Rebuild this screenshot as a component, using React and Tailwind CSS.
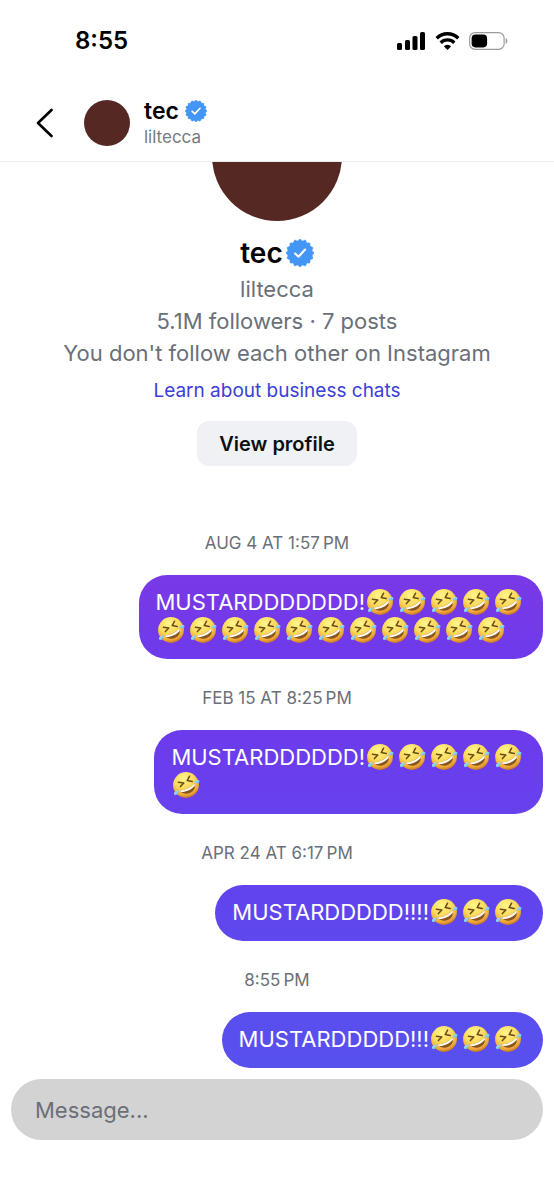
import { useState } from 'react';

const FONT = "font-['Inter','Liberation_Sans',sans-serif]";

const messages = [
   {
      time: 'AUG 4 AT 1:57\u202fPM',
      color: 'from-[#7939e6] to-[#6e3aeb]',
      lines: [{ text: 'MUSTARDDDDDDD!', laughs: 5 }, { text: '', laughs: 11 }],
   },
   {
      time: 'FEB 15 AT 8:25\u202fPM',
      color: 'from-[#6c3bec] to-[#6741ee]',
      lines: [{ text: 'MUSTARDDDDDD!', laughs: 5 }, { text: '', laughs: 1 }],
   },
   {
      time: 'APR 24 AT 6:17\u202fPM',
      color: 'from-[#6243ed] to-[#5e48ee]',
      lines: [{ text: 'MUSTARDDDDD!!!!', laughs: 3 }],
   },
   {
      time: '8:55\u202fPM',
      color: 'from-[#594eee] to-[#5850ee]',
      lines: [{ text: 'MUSTARDDDDD!!!', laughs: 3 }],
   },
];

// 16 flat teeth around the centre of a 40x40 box
const badgePoints = Array.from({ length: 64 }, (_, i) => {
   const angle = ((i - 0.5) / 64) * Math.PI * 2;
   const radius = i % 4 < 2 ? 19.7 : 17.8;
   return `${(20 + radius * Math.sin(angle)).toFixed(2)},${(20 - radius * Math.cos(angle)).toFixed(2)}`;
}).join(' ');

function VerifiedBadge({ className }) {
   return (
      <svg viewBox="0 0 40 40" className={className} role="img" aria-label="Verified">
         <polygon points={badgePoints} fill="#4496f6" stroke="#4496f6" strokeWidth="0.6" strokeLinejoin="round" />
         <path d="M13 20.6l4.8 4.7L27.3 15" fill="none" stroke="#fff" strokeWidth="3" strokeLinecap="round" strokeLinejoin="round" />
      </svg>
   );
}

function EmojiDefs() {
   return (
      <svg width="0" height="0" className="absolute" aria-hidden="true">
         <defs>
            <radialGradient id="face" cx="0.42" cy="0.25" r="0.8">
               <stop offset="0" stopColor="#fff68c" />
               <stop offset="0.5" stopColor="#fbd85a" />
               <stop offset="0.8" stopColor="#eda637" />
               <stop offset="1" stopColor="#b9651f" />
            </radialGradient>
            <linearGradient id="tear" x1="0" y1="0" x2="1" y2="1">
               <stop offset="0" stopColor="#b5ecff" />
               <stop offset="1" stopColor="#5bb6ea" />
            </linearGradient>
         </defs>
      </svg>
   );
}

function Laugh() {
   return (
      <svg viewBox="0 0 28 28" className="mr-[3px] ml-px h-7 w-7 shrink-0" role="img" aria-label="🤣">
         <circle cx="14" cy="14" r="12.9" fill="url(#face)" />
         <path d="M6.4 11.2l5.4.9-3.4 3.5M17.6 5.2l-2.4 4.4 5 1" fill="none" stroke="#6d4a12" strokeWidth="1.5" strokeLinecap="round" strokeLinejoin="round" />
         <path d="M7.4 19.4C12.8 19.4 19 16.5 22.4 12.2c1.5 4-.4 7.9-4.1 9.6-4.1 1.8-8.8.5-10.9-2.4z" fill="#8a5520" />
         <path d="M7.4 19.4C12.8 19.4 19 16.5 22.4 12.2c.4 1 .5 1.8.5 2.6-3.3 3.9-8.8 6.4-13.7 6.3-.7-.5-1.3-1-1.8-1.7z" fill="#fffaf0" />
         <path d="M6.9 19.3c-2.2.2-4.4 1.3-4.9 2.8-.4 1.3.8 2.4 2.1 2 1.7-.5 2.4-2.7 2.8-4.8z" fill="url(#tear)" />
         <path d="M22 11.2c.9-1.5 3-2.5 4.5-2.1 1.3.4 1.3 2.2.2 2.9-1.2.8-3.3.2-4.7-.8z" fill="url(#tear)" />
      </svg>
   );
}

function StatusBar() {
   return (
      <div className="flex h-[82px] items-center justify-between pr-[46px] pl-[75px]">
         <span className="text-2xl font-semibold">8:55</span>
         <div className="flex items-center gap-[9px]">
            <svg width="29" height="18" viewBox="0 0 29 18" aria-hidden="true">
               <rect x="0" y="11" width="5" height="7" rx="1.5" />
               <rect x="8" y="8" width="5" height="10" rx="1.5" />
               <rect x="15.5" y="4" width="5" height="14" rx="1.5" />
               <rect x="23" y="0" width="5" height="18" rx="1.5" />
            </svg>
            <svg width="25" height="18" viewBox="0 0 25 18" aria-hidden="true">
               <g fill="none" stroke="#000" strokeWidth="3.4">
                  <path d="M1.7 6.2a15.5 15.5 0 0 1 21.6 0" />
                  <path d="M5.7 10.7a9.7 9.7 0 0 1 13.6 0" />
               </g>
               <path d="M12.5 18l-3.7-3.7a5.2 5.2 0 0 1 7.4 0z" />
            </svg>
            <svg width="39" height="18" viewBox="0 0 39 18" aria-hidden="true">
               <rect x="0.6" y="0.6" width="34.5" height="16.8" rx="5.5" fill="none" stroke="#9b9b9b" strokeWidth="1.2" />
               <rect x="2.6" y="2.6" width="15.5" height="12.8" rx="3.8" />
               <path d="M36.7 6v6c2.2-1 2.2-5 0-6z" fill="#9b9b9b" />
            </svg>
         </div>
      </div>
   );
}

function ChatHeader() {
   return (
      <header className="flex h-20 items-center border-b border-[#ececee] pt-[2px] pl-9">
         <button type="button" aria-label="Back" className="flex h-8 w-5 items-center">
            <svg width="17" height="30" viewBox="0 0 17 30" fill="none" stroke="#000" strokeWidth="2.6" strokeLinecap="round" strokeLinejoin="round">
               <path d="M15.5 2L2 15l13.5 13" />
            </svg>
         </button>
         <div className="ml-7 h-[46px] w-[46px] rounded-full bg-[#562824]" />
         <div className="ml-[14px]">
            <div className="flex items-center gap-[6px]">
               <span className="text-[23px] leading-7 font-semibold">tec</span>
               <VerifiedBadge className="h-[22px] w-[22px]" />
            </div>
            <p className="text-[17px] leading-6 text-[#767a83]">liltecca</p>
         </div>
      </header>
   );
}

function Profile() {
   return (
      <section className="flex flex-col items-center text-[22px] text-[#6a6f78]">
         <div className="flex h-[59px] items-end overflow-hidden">
            <div className="h-[130px] w-[130px] shrink-0 rounded-full bg-[#562824]" />
         </div>
         <div className="mt-4 flex items-center gap-[3px]">
            <h1 className="text-[28px] leading-8 font-semibold text-black">tec</h1>
            <VerifiedBadge className="h-7 w-7" />
         </div>
         <p className="mt-1 leading-8">liltecca</p>
         <p className="leading-8">5.1M followers · 7 posts</p>
         <p className="leading-8">You don't follow each other on Instagram</p>
         <a href="#business" className="mt-2 text-[19px] leading-7 text-[#3a3fd8]">Learn about business chats</a>
         <button type="button" className="mt-4 h-[45px] rounded-xl bg-[#f0f1f5] px-[22px] text-[20px] font-semibold text-[#0c1014]">
            View profile
         </button>
      </section>
   );
}

function Message({ time, color, lines }) {
   return (
      <>
         <p className="flex h-[71px] items-center justify-center pt-2 text-[17px] text-[#6a6f78]">{time}</p>
         <div className={`ml-auto w-fit rounded-[28px] bg-linear-to-b pt-[13px] pr-[18px] pb-[15px] pl-[17px] text-[22px] leading-7 whitespace-nowrap text-white ${color}`}>
            {lines.map((line, i) => (
               <div key={i} className="flex items-center">
                  {line.text && <span>{line.text}</span>}
                  {Array.from({ length: line.laughs }, (_, n) => <Laugh key={n} />)}
               </div>
            ))}
         </div>
      </>
   );
}

export default function App() {
   const [draft, setDraft] = useState('');

   return (
      <div className={`flex min-h-screen flex-col bg-white text-black ${FONT}`}>
         <EmojiDefs />
         <StatusBar />
         <ChatHeader />
         <main className="flex flex-col">
            <Profile />
            <div className="mt-[38px] px-[11px]">
               {messages.map((message) => <Message key={message.time} {...message} />)}
            </div>
         </main>
         <form className="mt-[11px] px-[11px]" onSubmit={(e) => e.preventDefault()}>
            <input
               type="text"
               aria-label="Message"
               placeholder="Message..."
               className="h-[61px] w-full rounded-full bg-[#d3d3d3] px-6 text-[22px] outline-none placeholder:text-[#6a6f78]"
               value={draft}
               onChange={(e) => setDraft(e.target.value)}
            />
         </form>
      </div>
   );
}
